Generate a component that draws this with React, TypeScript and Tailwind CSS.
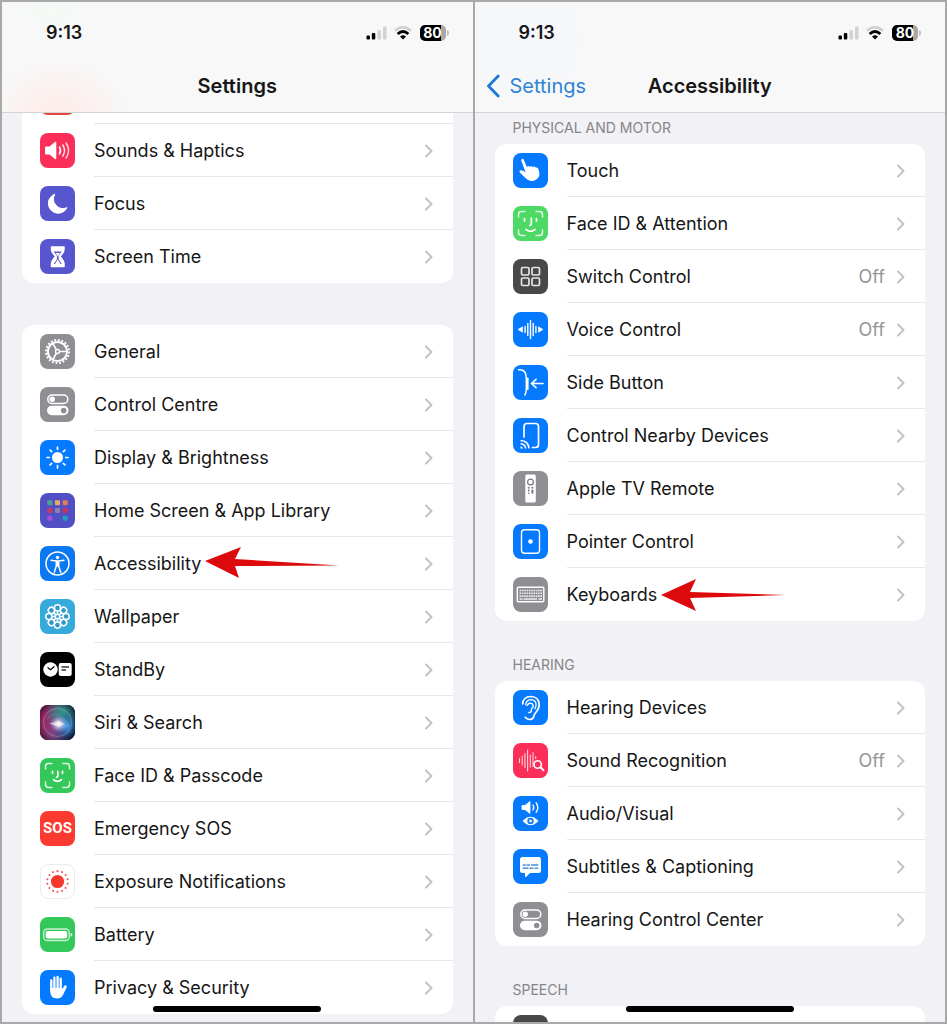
import React from 'react';

type Item = {
  label: string;
  tile: string;
  icon: React.ReactNode;
  value?: string;
  arrow?: React.ReactNode;
};

/* ---------- Icons, all drawn on a 35 x 35 tile ---------- */

function Glyph({ children }: { children?: React.ReactNode }) {
  return (
    <svg viewBox="0 0 35 35" className="h-full w-full" fill="none" stroke="none" aria-hidden="true">
      {children}
    </svg>
  );
}

const SoundsIcon = () => (
  <Glyph>
    <path d="M5 14.5q0-1 1-1h3.5L15 9q1.3-.8 1.3.8v15.4q0 1.600-1.300.8L9.500 21.500H6q-1 0-1-1z" fill="#fff" />
    <g stroke="#fff" strokeWidth="1.600" strokeLinecap="round">
      <path d="M19.500 14.200q2 3.300 0 6.600" />
      <path d="M22.800 12q3.600 5.500 0 11" opacity=".85" />
      <path d="M26.100 10q5 7.500 0 15" opacity=".75" />
    </g>
  </Glyph>
);

const MoonIcon = () => (
  <Glyph>
    <path d="M14.800 8.200A9.800 9.800 0 1 0 27 21.700 9.600 9.600 0 0 1 14.800 8.200z" fill="#fff" stroke="#fff" strokeLinejoin="round" />
  </Glyph>
);

const HourglassIcon = () => (
  <Glyph>
    <path d="M11.500 8h12.500v2.500c0 3-2.500 4.700-4 7 1.500 2.300 4 4 4 7V27.500H11.500V24.500c0-3 2.500-4.700 4-7-1.500-2.300-4-4-4-7z" fill="#fff" stroke="#fff" strokeWidth="1.500" strokeLinejoin="round" />
    <path d="M13.700 12.500h8L18.600 17v3.500l3.200 4.500h-8.100l3.200-4.500V17z" fill="#5856ce" />
    <path d="M15.500 14h4.500l-2.200 3.500zM17.700 20.500l2.800 4.500h-5.500z" fill="#fff" />
  </Glyph>
);

const GearIcon = () => (
  <Glyph>
    <circle cx="17.500" cy="17.500" r="11.500" stroke="#fff" strokeWidth="2" strokeDasharray="1.900 1.710" />
    <circle cx="17.500" cy="17.500" r="9.600" stroke="#fff" strokeWidth="2" />
    <circle cx="17.500" cy="17.500" r="2" stroke="#fff" strokeWidth="1.300" />
    <path d="M19.500 17.500H27M16.500 15.800 12.800 9.300M16.500 19.200l-3.700 6.500" stroke="#fff" strokeWidth="1.700" />
  </Glyph>
);

const TogglesIcon = () => (
  <Glyph>
    <rect x="7.800" y="8" width="20" height="8.500" rx="4.250" stroke="#fff" strokeWidth="1.500" />
    <circle cx="12.200" cy="12.250" r="2.700" fill="#fff" />
    <rect x="7" y="18.700" width="21.500" height="9.500" rx="4.750" fill="#fff" />
    <circle cx="23.700" cy="23.450" r="2.800" fill="#8e8e93" />
  </Glyph>
);

const SunIcon = () => (
  <Glyph>
    <circle cx="17.500" cy="17.500" r="5.500" fill="#fff" />
    <g stroke="#fff" strokeWidth="1.700" strokeLinecap="round">
      {[0, 45, 90, 135, 180, 225, 270, 315].map((a) => (
        <path key={a} d="M17.500 9.300V7" transform={`rotate(${a} 17.500 17.500)`} />
      ))}
    </g>
  </Glyph>
);

const HomeGridIcon = () => (
  <Glyph>
    <rect x="7.300" y="7.300" width="5" height="5" rx="1" fill="#4aa391" />
    <rect x="15" y="7.300" width="5" height="5" rx="1" fill="#e5ac62" />
    <rect x="22.700" y="7.300" width="5" height="5" rx="1" fill="#df7f55" />
    <rect x="7.300" y="15" width="5" height="5" rx="1" fill="#c33c62" />
    <rect x="15" y="15" width="5" height="5" rx="1" fill="#927fab" />
    <rect x="22.700" y="15" width="5" height="5" rx="1" fill="#c5335c" />
    <rect x="7.300" y="22.700" width="5" height="5" rx="1" fill="#a44fdc" />
    <rect x="22.700" y="22.700" width="5" height="5" rx="1" fill="#229dbd" />
  </Glyph>
);

const PersonIcon = () => (
  <Glyph>
    <circle cx="17.500" cy="17.500" r="11.500" stroke="#fff" strokeWidth="1.500" />
    <circle cx="17.500" cy="11.500" r="1.700" fill="#fff" />
    <path d="M11 14.300q6.500 1.600 13 0M17.500 15v5M16.300 15.500v4.500l-2 6.300M18.700 15.500v4.500l2 6.300" stroke="#fff" strokeWidth="1.500" strokeLinecap="round" strokeLinejoin="round" />
  </Glyph>
);

const FlowerIcon = () => (
  <Glyph>
    {[0, 45, 90, 135, 180, 225, 270, 315].map((a) => (
      <g key={a} transform={`rotate(${a} 17.500 17.500)`}>
        <circle cx="17.500" cy="8.900" r="3.100" stroke="#fff" strokeWidth="1.500" fill="#2f9ac7" />
        <path d="M17.500 12v3.500" stroke="#fff" strokeWidth="1.600" />
      </g>
    ))}
    <circle cx="17.500" cy="17.500" r="2.200" stroke="#fff" strokeWidth="1.200" />
  </Glyph>
);

const StandByIcon = () => (
  <Glyph>
    <circle cx="10.500" cy="17.500" r="7.200" fill="#fff" />
    <path d="m8 15.800 2.500 2 3.500-3" stroke="#111" strokeWidth="1.400" strokeLinecap="round" strokeLinejoin="round" />
    <rect x="18.700" y="11" width="13" height="13" rx="2" fill="#fff" />
    <path d="M21.500 15h7.500M21.500 18h4.500" stroke="#333" strokeWidth="1.400" />
  </Glyph>
);

const SiriIcon = () => (
  <Glyph>
    <defs>
      <linearGradient id="siri-base" x1="0" y1="0.400" x2="1" y2="0.600">
        <stop offset="0" stopColor="#a01e5c" />
        <stop offset=".45" stopColor="#7a4684" />
        <stop offset="1" stopColor="#0a2d55" />
      </linearGradient>
      <radialGradient id="siri-green" cx=".65" cy=".2" r=".5">
        <stop offset="0" stopColor="#2b9a8c" />
        <stop offset="1" stopColor="#1f8b7e" stopOpacity="0" />
      </radialGradient>
      <radialGradient id="siri-blue" cx=".75" cy=".6" r=".36">
        <stop offset="0" stopColor="#4aa8f4" />
        <stop offset="1" stopColor="#2574c8" stopOpacity="0" />
      </radialGradient>
      <radialGradient id="siri-core" cx=".53" cy=".54" r=".24">
        <stop offset="0" stopColor="#fff" />
        <stop offset=".3" stopColor="#f3e4f5" stopOpacity=".75" />
        <stop offset="1" stopColor="#d9a8d8" stopOpacity="0" />
      </radialGradient>
      <radialGradient id="siri-edge" cx=".5" cy=".5" r=".7">
        <stop offset=".6" stopColor="#101018" stopOpacity="0" />
        <stop offset="1" stopColor="#101018" stopOpacity=".85" />
      </radialGradient>
    </defs>
    <rect width="35" height="35" fill="url(#siri-base)" />
    <rect width="35" height="35" fill="url(#siri-green)" />
    <rect width="35" height="35" fill="url(#siri-blue)" />
    <rect width="35" height="35" fill="url(#siri-edge)" />
    <rect width="35" height="35" fill="url(#siri-core)" />
    <path d="m9 18.500 9-2.500 7 3-6 3z" fill="#fff" fillOpacity=".55" />
    <circle cx="17.500" cy="17.500" r="14" stroke="#a4b8c4" strokeOpacity=".4" />
    <path d="M7 14q6-7 13-3t9 11" stroke="#7fd0c8" strokeOpacity=".35" />
  </Glyph>
);

const Brackets = () => (
  <path d="M5.500 11V8.500q0-3 3-3H12M23 5.500h3.500q3 0 3 3V11M29.500 24v2.500q0 3-3 3H23M12 29.500H8.500q-3 0-3-3V24" stroke="#fff" strokeOpacity=".85" strokeWidth="1.500" strokeLinecap="round" />
);

const FaceIdIcon = () => (
  <Glyph>
    <Brackets />
    <path d="M12.500 13.300v2M22.500 13.300v2M17.800 13.300v4.700q0 1.300-1.300 1.300M13.500 21.700q4 3.300 8 0" stroke="#fff" strokeWidth="1.700" strokeLinecap="round" />
  </Glyph>
);

const FaceAttentionIcon = () => (
  <Glyph>
    <Brackets />
    <path d="M11.500 12.500v2.500M23.500 12.500v2.500M18.300 12v6q0 1.500-1.600 1.500M13 23.500q4.500 3.500 9 0" stroke="#fff" strokeWidth="1.700" strokeLinecap="round" />
  </Glyph>
);

const ExposureIcon = () => (
  <Glyph>
    <circle cx="17.500" cy="17.500" r="7" fill="#f5372c" />
    {Array.from({ length: 14 }, (_, i) => (
      <circle key={i} cx="17.500" cy="6.500" r="1.100" fill="#f0574e" transform={`rotate(${(i * 360) / 14} 17.500 17.500)`} />
    ))}
  </Glyph>
);

const BatteryIcon = () => (
  <Glyph>
    <rect x="3.700" y="12" width="25.500" height="11.500" rx="3.500" stroke="#fff" strokeOpacity=".75" strokeWidth="1.300" />
    <rect x="5.700" y="14" width="21.500" height="7.500" rx="1.800" fill="#fff" />
    <path d="M30.500 15.800q2 .6 2 2t-2 2z" fill="#fff" fillOpacity=".8" />
  </Glyph>
);

const HandIcon = () => (
  <Glyph>
    <g stroke="#fff" strokeWidth="2.300" strokeLinecap="round">
      <path d="M11.300 10.500v9M14.400 7.700v11M17.600 6.900v11.500M20.700 8.700v10.500" />
    </g>
    <path d="M10.150 18h11.700v1.500l2.300-3.500q1-1.300 2-.6.900.7.400 2l-3.200 6.800q-2 4.300-6.300 4.300-6.900 0-6.900-7.500z" fill="#fff" />
  </Glyph>
);

const TouchIcon = () => (
  <Glyph>
    <path d="M8.300 7.800q-.4-1.500.9-1.900 1.200-.3 1.700 1l3 7.300q.7-1.500 2-1.100.9.200 1.100 1.100.5-1.300 1.800-1 1 .2 1.200 1.200.5-1 1.600-.8 1 .2 1.300 1.200 1.600-.7 2.300 1 3 6.700-1.200 10.300-4.300 3.300-8.900.9-2.300-1.300-8-7.200-1.200-1.300-.3-2.200 1-.8 2.500 0l3.200 1.700z" fill="#fff" />
  </Glyph>
);

const SwitchIcon = () => (
  <Glyph>
    <g stroke="#e6e6e6" strokeWidth="1.700">
      <rect x="8.500" y="8.500" width="7.500" height="7.500" rx="1.300" />
      <rect x="19" y="8.500" width="7.500" height="7.500" rx="1.300" />
      <rect x="8.500" y="19" width="7.500" height="7.500" rx="1.300" />
      <rect x="19" y="19" width="7.500" height="7.500" rx="1.300" />
    </g>
  </Glyph>
);

const VoiceIcon = () => (
  <Glyph>
    <path d="m5 17.500 4.500-2.700v5.400zM30 17.500l-4.500-2.700v5.400z" fill="#fff" stroke="#fff" strokeWidth=".6" strokeLinejoin="round" />
    <path d="M12.100 14.500v6M14.800 11.500v12M17.500 8.500v18M20.200 11.500v12M22.900 14.500v6" stroke="#fff" strokeWidth="1.400" strokeLinecap="round" />
  </Glyph>
);

const SideButtonIcon = () => (
  <Glyph>
    <path d="M5.500 4.700h1.500q5.500.3 6 6l.3 3.300v10q0 3-1.300 6" stroke="#fff" strokeWidth="1.500" strokeLinecap="round" />
    <path d="M14.600 13.500v10.500" stroke="#fff" strokeWidth="2" strokeLinecap="round" />
    <path d="M30 18.500H18.800M23 14.300 18.500 18.500l4.500 4.200" stroke="#fff" strokeWidth="1.700" strokeLinecap="round" strokeLinejoin="round" />
  </Glyph>
);

const NearbyIcon = () => (
  <Glyph>
    <path d="M11 19V8.500q0-3 3-3h8.500q3 0 3 3v18q0 3-3 3h-3" stroke="#fff" strokeWidth="1.700" strokeLinecap="round" />
    <path d="M7.500 22.500q8 .3 8.500 8M7.500 25.700q4.800.3 5.200 4.800" stroke="#fff" strokeWidth="1.500" />
    <path d="M7.500 28.300q2.200.2 2.400 2.200H7.500z" fill="#fff" />
  </Glyph>
);

const RemoteIcon = () => (
  <Glyph>
    <rect x="12.300" y="3.500" width="10.500" height="28" rx="1.500" fill="#fff" />
    <circle cx="17.500" cy="11" r="2.900" stroke="#77777c" strokeWidth="1.200" />
    <g fill="#77777c">
      <circle cx="15.700" cy="16.800" r="1" />
      <circle cx="15.700" cy="19.600" r="1" />
      <circle cx="15.700" cy="22.200" r=".8" />
      <circle cx="19.400" cy="16.800" r="1" />
      <rect x="18.400" y="18.500" width="2" height="4.300" rx="1" />
    </g>
  </Glyph>
);

const PointerIcon = () => (
  <Glyph>
    <rect x="8.500" y="5.700" width="18" height="23.500" rx="3" stroke="#fff" strokeWidth="1.400" />
    <circle cx="17.500" cy="17.500" r="2.300" fill="#fff" />
  </Glyph>
);

const KeyboardIcon = () => (
  <Glyph>
    <rect x="4.300" y="10.300" width="26.500" height="14.500" rx="1" stroke="#fff" strokeWidth="1.400" />
    <path d="M6.500 13.500h22.500M6.500 16.300h22.500M6.500 19.100h22.500" stroke="#fff" strokeOpacity=".85" strokeWidth="1.600" strokeDasharray="1.600 .720" />
    <path d="M6.500 22h3M10.500 22h13.500M25.500 22h3.500" stroke="#fff" strokeOpacity=".85" strokeWidth="1.600" />
  </Glyph>
);

const EarIcon = () => (
  <Glyph>
    <g stroke="#fff" strokeWidth="1.700" strokeLinecap="round" strokeLinejoin="round">
      <path d="M9.700 14q.3-7.300 8.300-7.500 8 .4 8.200 8-.1 4.500-3 7.500-2 2-2.400 4.500-.8 3-4.300 3-2.800-.2-4.300-2.200" />
      <path d="M12.700 14.500q.5-4.700 5.200-4.900 4.900.2 5.200 4.900 0 2.500-1.300 4.300" strokeWidth="1.300" />
      <path d="M14 15.500q2.200-3.600 5-1.800 2.500 2.500-.2 4.800-1 .8-.4 2.300-.4 2-2.600 1.700" strokeWidth="1.400" />
    </g>
  </Glyph>
);

const SoundSearchIcon = () => (
  <Glyph>
    <path d="M6.500 15.500v4M9.200 13v9M11.900 10.500v14M14.600 7v21M17.300 12v12M20 9.500v14M22.700 13.500v2" stroke="#fff" strokeOpacity=".8" strokeWidth="1.100" strokeLinecap="round" />
    <circle cx="24.700" cy="21.500" r="3.700" stroke="#fff" strokeWidth="1.600" fill="#fa2e58" />
    <path d="m27.500 24.300 3 3" stroke="#fff" strokeWidth="2" strokeLinecap="round" />
  </Glyph>
);

const AudioVisualIcon = () => (
  <Glyph>
    <path d="M9 9.500h2.800L17 5.500v12l-5.200-4H9z" fill="#fff" stroke="#fff" strokeWidth=".8" strokeLinejoin="round" />
    <path d="M20 9q1.500 2.500 0 5M23.200 6.800q3.200 4.700 0 9.400" stroke="#fff" strokeWidth="1.400" strokeLinecap="round" />
    <path d="M9.500 25q8-8.500 16 0-8 8.500-16 0z" fill="#fff" />
    <circle cx="17.500" cy="25" r="3.200" fill="#0a7aee" />
    <circle cx="17.500" cy="25" r="1.400" fill="#fff" />
  </Glyph>
);

const SubtitlesIcon = () => (
  <Glyph>
    <path d="M9.500 8h16q2.500 0 2.500 2.500v11q0 2.500-2.500 2.500H17l-3.700 3.700q-1.300.8-1.300-.7v-3H9.500Q7 24 7 21.500v-11Q7 8 9.500 8z" fill="#fff" />
    <path d="M9.700 16h3M13.500 16H17M18 16h7.300M9.700 19.200h5.800M16.500 19.200h4M21.500 19.200h3.800" stroke="#4a8fe0" strokeWidth="1.600" />
  </Glyph>
);

const RedArrow = ({ d }: { d: string }) => (
  <svg viewBox="0 0 134 34" className="pointer-events-none absolute left-full top-1/2 z-10 ml-1 h-[34px] w-[134px] -translate-y-1/2" aria-hidden="true">
    <path d={d} fill="#dc0a0c" />
  </svg>
);

/* ---------- Data ---------- */

const topItems: Item[] = [
  { label: 'Notifications', tile: 'bg-[#e5453b]', icon: <Glyph /> },
  { label: 'Sounds & Haptics', tile: 'bg-[#fa2e58]', icon: <SoundsIcon /> },
  { label: 'Focus', tile: 'bg-[#5856ce]', icon: <MoonIcon /> },
  { label: 'Screen Time', tile: 'bg-[#5856ce]', icon: <HourglassIcon /> },
];

const generalItems: Item[] = [
  { label: 'General', tile: 'bg-[#8e8e93]', icon: <GearIcon /> },
  { label: 'Control Centre', tile: 'bg-[#8e8e93]', icon: <TogglesIcon /> },
  { label: 'Display & Brightness', tile: 'bg-[#057aff]', icon: <SunIcon /> },
  { label: 'Home Screen & App Library', tile: 'bg-[#524fc4]', icon: <HomeGridIcon /> },
  {
    label: 'Accessibility',
    tile: 'bg-[#0a78f0]',
    icon: <PersonIcon />,
    arrow: <RedArrow d="M0 14 36 0 30 12 134 18.500 30 19 34 31z" />,
  },
  { label: 'Wallpaper', tile: 'bg-[#36aadb]', icon: <FlowerIcon /> },
  { label: 'StandBy', tile: 'bg-black', icon: <StandByIcon /> },
  { label: 'Siri & Search', tile: 'bg-[#1a1a28]', icon: <SiriIcon /> },
  { label: 'Face ID & Passcode', tile: 'bg-[#34c759]', icon: <FaceIdIcon /> },
  {
    label: 'Emergency SOS',
    tile: 'bg-[#fb3a30]',
    icon: <span className="font-['Roboto',sans-serif] text-[15px] font-bold leading-none text-white">SOS</span>,
  },
  { label: 'Exposure Notifications', tile: 'border border-[#ececf0] bg-white', icon: <ExposureIcon /> },
  { label: 'Battery', tile: 'bg-[#34c759]', icon: <BatteryIcon /> },
  { label: 'Privacy & Security', tile: 'bg-[#057aff]', icon: <HandIcon /> },
];

const motorItems: Item[] = [
  { label: 'Touch', tile: 'bg-[#057aff]', icon: <TouchIcon /> },
  { label: 'Face ID & Attention', tile: 'bg-[#4cd964]', icon: <FaceAttentionIcon /> },
  { label: 'Switch Control', tile: 'bg-[#48484a]', icon: <SwitchIcon />, value: 'Off' },
  { label: 'Voice Control', tile: 'bg-[#057aff]', icon: <VoiceIcon />, value: 'Off' },
  { label: 'Side Button', tile: 'bg-[#057aff]', icon: <SideButtonIcon /> },
  { label: 'Control Nearby Devices', tile: 'bg-[#057aff]', icon: <NearbyIcon /> },
  { label: 'Apple TV Remote', tile: 'bg-[#8e8e93]', icon: <RemoteIcon /> },
  { label: 'Pointer Control', tile: 'bg-[#057aff]', icon: <PointerIcon /> },
  {
    label: 'Keyboards',
    tile: 'bg-[#8e8e93]',
    icon: <KeyboardIcon />,
    arrow: <RedArrow d="M0 17 35 1 29 14 125 17 29 20 35 33z" />,
  },
];

const hearingItems: Item[] = [
  { label: 'Hearing Devices', tile: 'bg-[#057aff]', icon: <EarIcon /> },
  { label: 'Sound Recognition', tile: 'bg-[#fa2e58]', icon: <SoundSearchIcon />, value: 'Off' },
  { label: 'Audio/Visual', tile: 'bg-[#057aff]', icon: <AudioVisualIcon /> },
  { label: 'Subtitles & Captioning', tile: 'bg-[#057aff]', icon: <SubtitlesIcon /> },
  { label: 'Hearing Control Center', tile: 'bg-[#8e8e93]', icon: <TogglesIcon /> },
];

const speechItems: Item[] = [{ label: '', tile: 'bg-[#48484a]', icon: <Glyph /> }];

/* ---------- Layout pieces ---------- */

function Row({ item }: { item: Item }) {
  return (
    <li className="group">
      <a href="#" className="flex h-[53px] items-center gap-[19px] pl-[18px]">
        <span className={`flex h-[35px] w-[35px] shrink-0 items-center justify-center overflow-hidden rounded-lg ${item.tile}`}>
          {item.icon}
        </span>
        <span className="flex h-full flex-1 items-center border-b border-[#e8e8eb] pr-5 pt-0.5 group-last:border-transparent">
          <span className="relative whitespace-nowrap">
            {item.label}
            {item.arrow}
          </span>
          <span className="ml-auto text-[#949498]">{item.value}</span>
          <svg viewBox="0 0 8 14" className="ml-3 h-3.5 w-2" fill="none" aria-hidden="true">
            <path d="m1 1.500 5.500 5.500L1 12.500" stroke="#c2c2c5" strokeWidth="2" strokeLinecap="round" strokeLinejoin="round" />
          </svg>
        </span>
      </a>
    </li>
  );
}

function Card({ items }: { items: Item[] }) {
  return (
    <ul className="mx-5 rounded-xl bg-white">
      {items.map((item) => (
        <Row key={item.label} item={item} />
      ))}
    </ul>
  );
}

function StatusBar() {
  return (
    <div className="flex h-6 items-center pl-11 pr-6">
      <span className="text-lg font-semibold">9:13</span>
      <svg viewBox="0 0 22 14" className="ml-auto h-3.5 w-[22px]" aria-hidden="true">
        <rect x="0.500" y="9.500" width="3.500" height="4" rx="1" fill="#000" />
        <rect x="5.800" y="7" width="3.500" height="6.500" rx="1" fill="#000" />
        <rect x="11.500" y="4" width="3.500" height="9.500" rx="1" fill="#d2d2d2" />
        <rect x="17" y="0.500" width="3.500" height="13" rx="1" fill="#d2d2d2" />
      </svg>
      <svg viewBox="0 0 18 14" className="ml-1.5 h-3.5 w-[18px]" fill="none" aria-hidden="true">
        <path d="M1 4.700q8-7 16 0" stroke="#cfcfcf" strokeWidth="2.500" />
        <path d="M3.600 8q5.400-5 10.800 0" stroke="#000" strokeWidth="2.700" />
        <path d="M6 10.500q3-2.400 6 0L9 13.500z" fill="#000" />
      </svg>
      <span className="ml-2 flex h-4 w-[26px] items-center justify-center rounded-[5px] bg-[linear-gradient(to_right,#000_82%,#a8a8a8_82%)] text-sm font-bold leading-none text-white">
        80
      </span>
      <span className="ml-px h-1.5 w-0.5 rounded-r-sm bg-[#c4c4c4]" />
    </div>
  );
}

function Header({ title, back, tint }: { title: string; back?: string; tint: string }) {
  return (
    <header className={`relative z-20 shrink-0 border-b border-[#d3d3d6] bg-[#f8f8f8] pb-1 pt-[19px] ${tint}`}>
      <StatusBar />
      <div className="mt-[19px] grid h-11 grid-cols-[1fr_auto_1fr] items-center text-xl">
        <div>
          {back && (
            <a href="#" className="flex items-center gap-2.5 pl-[11px] text-[#2f85d3]">
              <svg viewBox="0 0 14 24" className="h-6 w-3.5" fill="none" aria-hidden="true">
                <path d="M12.200 2 2.500 12l9.700 10" stroke="#1c7ad6" strokeWidth="2.800" strokeLinecap="round" strokeLinejoin="round" />
              </svg>
              {back}
            </a>
          )}
        </div>
        <h1 className="font-semibold">{title}</h1>
      </div>
    </header>
  );
}

function SectionLabel({ children, className }: { children: React.ReactNode; className: string }) {
  return <h2 className={`pb-1.5 pl-[38px] text-sm leading-5 text-[#85858a] ${className}`}>{children}</h2>;
}

function HomeIndicator() {
  return <div className="absolute bottom-2.5 left-1/2 z-20 h-1.5 w-[168px] -translate-x-1/2 rounded-full bg-black" />;
}

export default function App() {
  return (
    <div className="flex h-screen overflow-hidden border-2 border-[#a9a9a9] bg-[#f1f1f6] font-['Inter',sans-serif] text-lg text-[#161616]">
      {/* Settings */}
      <section className="relative flex min-w-0 flex-1 flex-col overflow-hidden">
        <Header
          title="Settings"
          tint="bg-[radial-gradient(ellipse_70px_55px_at_56px_112px,#fdebe8,transparent),radial-gradient(ellipse_50px_30px_at_50px_8px,#f4faf5,transparent)]"
        />
        <main className="-mt-[42px] flex flex-col gap-[42px]">
          <Card items={topItems} />
          <Card items={generalItems} />
        </main>
        <HomeIndicator />
      </section>

      {/* Accessibility */}
      <section className="relative flex min-w-0 flex-1 flex-col overflow-hidden border-l-2 border-[#a9a9a9]">
        <Header
          title="Accessibility"
          back="Settings"
          tint="bg-[radial-gradient(ellipse_80px_80px_at_50px_40px,#f4f7fb,transparent)]"
        />
        <main>
          <SectionLabel className="pt-[5px]">PHYSICAL AND MOTOR</SectionLabel>
          <Card items={motorItems} />
          <SectionLabel className="pt-[34px]">HEARING</SectionLabel>
          <Card items={hearingItems} />
          <SectionLabel className="pt-[34px]">SPEECH</SectionLabel>
          <Card items={speechItems} />
        </main>
        <HomeIndicator />
      </section>
    </div>
  );
}
